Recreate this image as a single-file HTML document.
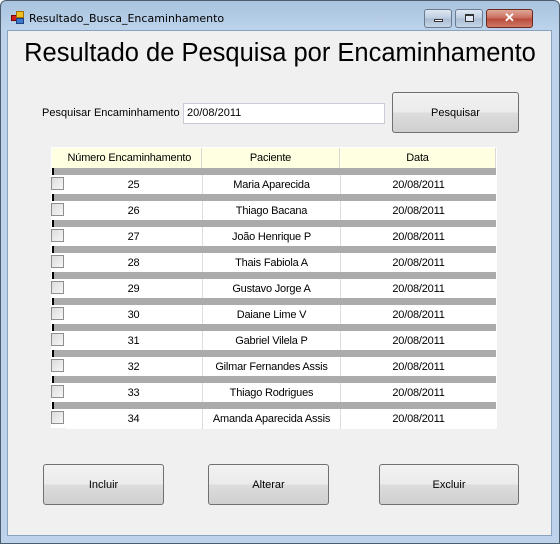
<!DOCTYPE html>
<html><head><style>
*{margin:0;padding:0;box-sizing:border-box}
body{width:560px;height:544px;overflow:hidden;background:#fff;font-family:"Liberation Sans",Arial,sans-serif;font-size:11px;color:#000;position:relative}
.win{position:absolute;left:0;top:0;width:560px;height:544px;background:linear-gradient(#a9c3de,#bcd3eb 30px,#bcd3eb);border:1px solid #4d5d70;border-radius:6px 6px 0 0}
.client{position:absolute;left:7px;top:30px;width:545px;height:506px;background:#f0f0f0;border:1px solid #8aa2bd}
.abs{position:absolute}
.btn{position:absolute;border:1px solid #707070;border-radius:3px;background:linear-gradient(#f2f2f2,#ebebeb 50%,#dddddd 50%,#cfcfcf);display:flex;align-items:center;justify-content:center;font-size:11px}
.cap{position:absolute;top:8px;height:19px;border:1px solid #6b7a8f;border-radius:3px;background:linear-gradient(#dfe8f3,#bccbde 50%,#aabcd3 50%,#c6d6e8)}
.cell{position:absolute;height:20px;background:#fff;display:flex;align-items:center;justify-content:center;font-size:11px;letter-spacing:-0.2px}
.hdr{background:#ffffe1;border-right:1px solid #d8d8d8}
.bar{position:absolute;left:52px;width:444px;height:7px;background:#ababab}
.chk{position:absolute;left:51px;width:13px;height:13px;border:1px solid #8f8f8f;background:linear-gradient(135deg,#dcdcdc,#f6f6f6)}
</style></head><body>
<div class="win">
<div class="abs" style="left:10px;top:10px;width:13px;height:13px">
<div class="abs" style="left:0;top:4px;width:6px;height:6px;background:#d02020;border:1px solid #700"></div>
<div class="abs" style="left:5px;top:0;width:8px;height:7px;background:#f0c020;border:1px solid #a07000"></div>
<div class="abs" style="left:5px;top:7px;width:8px;height:6px;background:#3a78d0;border:1px solid #204080"></div>
</div>
<div class="abs" style="left:28px;top:11px;font-family:'DejaVu Sans',sans-serif;font-size:11px">Resultado_Busca_Encaminhamento</div>
<div class="cap" style="left:423px;width:28px"><div class="abs" style="left:9px;top:9px;width:9px;height:3px;border:1px solid #333;background:#fff"></div></div>
<div class="cap" style="left:454px;width:28px"><div class="abs" style="left:9px;top:4px;width:9px;height:8px;border:1px solid #333;border-top-width:2px;background:#dfe8f3"></div></div>
<div class="cap" style="left:485px;width:47px;background:linear-gradient(#e0a898,#c86858 50%,#b84a38 50%,#d07868);border-color:#6a2a20;color:#fff;text-align:center;font-weight:bold;font-size:13px;line-height:16px">✕</div>
</div>
<div class="client"></div>
<div class="abs" style="left:0;top:39px;width:560px;text-align:center;font-size:25.5px">Resultado de Pesquisa por Encaminhamento</div>
<div class="abs" style="left:42px;top:107px">Pesquisar Encaminhamento</div>
<div class="abs" style="left:183px;top:103px;width:202px;height:21px;background:#fff;border:1px solid #c8ccd4;padding:3px 0 0 3px">20/08/2011</div>
<div class="btn" style="left:392px;top:92px;width:127px;height:41px">Pesquisar</div>

<div class="abs" style="left:51px;top:147px;width:446px;height:281px;background:#fff"></div>
<div class="cell hdr" style="left:52px;top:148px;width:150px">&nbsp;&nbsp;Número Encaminhamento</div>
<div class="cell hdr" style="left:202px;top:148px;width:138px">Paciente</div>
<div class="cell hdr" style="left:340px;top:148px;width:156px">Data</div>
<div id="rows"></div>
<script>
var d=[["25","Maria Aparecida"],["26","Thiago Bacana"],["27","João Henrique P"],["28","Thais Fabiola A"],["29","Gustavo Jorge A"],["30","Daiane Lime V"],["31","Gabriel Vilela P"],["32","Gilmar Fernandes Assis"],["33","Thiago Rodrigues"],["34","Amanda Aparecida Assis"]];
var h="";d.forEach(function(r,i){var t=168+26*i;
h+='<div class="bar" style="top:'+t+'px"></div><div class="abs" style="left:52px;top:'+t+'px;width:2px;height:7px;background:#000"></div>';
h+='<div class="chk" style="top:'+(t+9)+'px"></div>';
h+='<div class="cell" style="left:66px;top:'+(t+7)+'px;width:135px">'+r[0]+'</div>';
h+='<div class="cell" style="left:202px;top:'+(t+7)+'px;width:138px;border-left:1px solid #ddd">'+r[1]+'</div>';
h+='<div class="cell" style="left:340px;top:'+(t+7)+'px;width:156px;border-left:1px solid #ddd">20/08/2011</div>';});
document.getElementById("rows").innerHTML=h;
</script>
<div class="btn" style="left:43px;top:464px;width:121px;height:41px">Incluir</div>
<div class="btn" style="left:208px;top:464px;width:121px;height:41px">Alterar</div>
<div class="btn" style="left:379px;top:464px;width:140px;height:41px">Excluir</div>
</body></html>
